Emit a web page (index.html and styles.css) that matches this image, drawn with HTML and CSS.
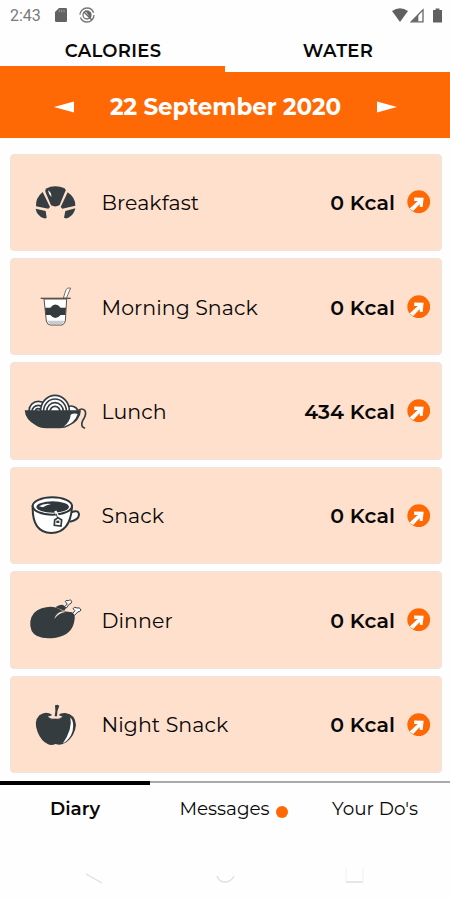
FILE: index.html
```html
<!DOCTYPE html>
<html lang="en">
<head>
<meta charset="utf-8">
<title>Diary</title>
<link rel="stylesheet" href="styles.css">
</head>
<body>
<svg width="0" height="0" class="defs"><defs>
<symbol id="go" viewBox="0 0 72 72"><circle cx="36" cy="36" r="35" fill="#ff6905"/><path d="M22 23L51 24L48 52L39 51V43L19 64L8 57L33 34H22Z" fill="#fff"/></symbol>
</defs></svg>
<header class="status">
  <span class="clock">2:43</span>
  <svg class="sd" viewBox="0 0 36 42"><path d="M12 0H32Q36 0 36 4V38Q36 42 32 42H4Q0 42 0 38V12Z" fill="#626262"/><path d="M13 5V13M20 5V13M27 5V13" stroke="#999" stroke-width="3"/></svg>
  <svg class="sync" viewBox="0 0 48 48"><circle cx="24" cy="24" r="21" fill="none" stroke="#777" stroke-width="4" stroke-dasharray="58 8"/><circle cx="24" cy="24" r="12" fill="none" stroke="#777" stroke-width="4"/><path d="M14 14L38 38M23 14L34 18V29Z" stroke="#666" stroke-width="4" fill="#666"/></svg>
  <span class="space"></span>
  <svg class="wifi" viewBox="0 0 48 42"><path d="M0 9Q24-8 48 9L24 42Z" fill="#606060"/></svg>
  <svg class="signal" viewBox="0 0 42 44"><path d="M4 41L39 5V41Z" fill="none" stroke="#686868" stroke-width="4"/><path d="M4 41L25 20V41Z" fill="#686868"/></svg>
  <svg class="battery" viewBox="0 0 28 44"><path d="M8 0H20V5H28V44H0V5H8Z" fill="#606060"/></svg>
</header>
<nav class="tabs"><div class="tab active"><span class="t-cal">CALORIES</span></div><div class="tab"><span class="t-wat">WATER</span></div></nav>
<section class="date">
  <svg class="arrow" viewBox="0 0 20 12"><path d="M0 6L20 .5V11.5Z" fill="#fff"/></svg>
  <h1>22 September 2020</h1>
  <svg class="arrow" viewBox="0 0 20 12"><path d="M20 6L0 .5V11.5Z" fill="#fff"/></svg>
</section>
<main class="meals">
  <article class="meal">
    <svg class="icon" viewBox="-15 -17 255 225"><g fill="#363e41"><path d="M77 54Q105 40 134 53L137 59L119 103Q107 111 93 104L76 63Z"/><path d="M68 64L90 109L85 114L48 107Q46 82 68 64Z"/><path d="M143 65L122 109L127 114L166 105Q166 80 143 65Z"/><path d="M47 114L77 121L80 141Q76 145 70 142Q50 134 47 114Z"/><path d="M166 113L136 121L132 141Q139 145 145 141Q162 133 166 113Z"/></g><path d="M84 59Q86 72 94 79Q95 65 84 59Z" fill="#fff"/></svg>
    <span class="name">Breakfast</span><span class="kcal">0 Kcal</span><svg class="go"><use href="#go"/></svg>
  </article>
  <article class="meal">
    <svg class="icon" viewBox="0 -3 255 225"><path d="M145 84L153 59Q157 52 167 54L154 85Z" fill="#fff" stroke="#776d66" stroke-width="3"/><path d="M87 87L94 153Q96 164 106 165H141Q149 162 151 153L155 87Z" fill="#fff" stroke="#55504c" stroke-width="3"/><path d="M96 152H149L141 163H105Z" fill="#c8cbcf"/><path d="M90 113H106Q121 94 137 113H153L151 135H137Q121 153 106 135H93Z" fill="#343c40"/><path d="M77 85H167" stroke="#5c504b" stroke-width="4"/></svg>
    <span class="name">Morning Snack</span><span class="kcal">0 Kcal</span><svg class="go"><use href="#go"/></svg>
  </article>
  <article class="meal">
    <svg class="icon" viewBox="0 -5 255 225"><g fill="#fff" stroke="#343c40" stroke-width="5"><ellipse cx="70" cy="105" rx="28" ry="28"/><ellipse cx="70" cy="107" rx="19" ry="18"/><ellipse cx="70" cy="108" rx="9" ry="9"/><ellipse cx="167" cy="109" rx="22" ry="18"/><ellipse cx="120" cy="105" rx="43" ry="46"/><ellipse cx="120" cy="106" rx="34" ry="36"/><ellipse cx="120" cy="107" rx="25" ry="26"/><ellipse cx="120" cy="108" rx="15" ry="16"/></g><path d="M29 104H198Q196 137 160 152Q151 158 134 158H94Q74 158 62 149Q31 132 29 104Z" fill="#343c40"/><path d="M167 117Q177 111 188 115Q180 142 146 153Q166 137 167 117Z" fill="#fff"/><path d="M190 104Q201 96 209 104Q215 113 208 126Q197 142 202 153L210 158" fill="none" stroke="#343c40" stroke-width="5"/></svg>
    <span class="name">Lunch</span><span class="kcal">434 Kcal</span><svg class="go"><use href="#go"/></svg>
  </article>
  <article class="meal">
    <svg class="icon" viewBox="0 -7 255 225"><path d="M169 96Q191 87 192 103Q191 119 164 124" fill="#fff" stroke="#30373a" stroke-width="6"/><path d="M53 78Q51 157 109 158Q167 157 171 78Z" fill="#fff" stroke="#30373a" stroke-width="6"/><ellipse cx="112" cy="77" rx="59" ry="26" fill="#fff" stroke="#30373a" stroke-width="6"/><ellipse cx="113" cy="80" rx="49" ry="17" fill="#30373a"/><path d="M72 78Q85 68 108 71Q91 75 84 81Z" fill="#fff"/><path d="M121 92L130 111" stroke="#fff" stroke-width="7"/><path d="M123 100L129 116" stroke="#30373a" stroke-width="3"/><path d="M119 119L129 112L140 119L138 137L118 135Z" fill="#fff" stroke="#30373a" stroke-width="5"/><path d="M124 121H133V128H124Z" fill="#30373a"/></svg>
    <span class="name">Snack</span><span class="kcal">0 Kcal</span><svg class="go"><use href="#go"/></svg>
  </article>
  <article class="meal">
    <svg class="icon" viewBox="0 -9 255 225"><path d="M121 67Q143 50 153 69L148 77Z" fill="#343c40"/><path d="M148 66L157 57L151 50Q151 44 160 47Q169 42 170 50L168 55Q162 55 154 69Z" fill="#fff" stroke="#343c40" stroke-width="3"/><path d="M172 86L180 77L174 71Q178 64 186 69Q194 65 198 75Q196 80 188 81L179 91Z" fill="#fff" stroke="#343c40" stroke-width="3"/><path d="M46 109Q51 79 80 70Q115 58 139 76Q151 80 171 82Q183 90 178 108Q172 149 123 158Q65 166 50 138Q44 125 46 109Z" fill="#343c40"/><path d="M147 79Q125 80 118 102Q130 84 152 81Z" fill="#ffe0ce"/></svg>
    <span class="name">Dinner</span><span class="kcal">0 Kcal</span><svg class="go"><use href="#go"/></svg>
  </article>
  <article class="meal">
    <svg class="icon" viewBox="0 -12 255 225"><path d="M119 76Q123 62 120 43L127 41L133 44Q126 57 126 76Z" fill="#343c40"/><path d="M112 72Q92 58 73 73Q55 91 68 124Q79 151 98 159Q108 165 122 159Q138 165 154 154Q180 134 183 102Q181 70 151 66Q137 65 131 72L142 77Q132 84 119 82Q107 84 99 77Z" fill="#343c40"/><path d="M166 79Q178 92 173 119Q166 145 143 158Q157 138 164 116Q170 97 166 79Z" fill="#fff"/><path d="M100 76Q109 87 120 82Q133 87 142 76" fill="none" stroke="#e4d2c7" stroke-width="2"/></svg>
    <span class="name">Night Snack</span><span class="kcal">0 Kcal</span><svg class="go"><use href="#go"/></svg>
  </article>
</main>
<nav class="bottom">
  <div class="item current"><span>Diary</span></div>
  <div class="item messages"><span>Messages</span><i class="dot"></i></div>
  <div class="item"><span>Your Do's</span></div>
</nav>
<footer class="system">
  <svg viewBox="0 0 450 40"><g fill="none" stroke="#dedede" stroke-width="1.3"><path d="M86 14L102 23M217 16Q219 22 225 22Q231 22 234 16M346 22H363"/><path d="M346 8V22M363 8V22" stroke="#f3f3f3"/></g></svg>
</footer>
</body>
</html>
```
FILE: styles.css
```css
* { box-sizing: border-box; }
body { margin: 0; width: 450px; height: 900px; overflow: hidden; background: #fefefe; color: #080808; font-family: Montserrat, Inter, sans-serif; display: flex; flex-direction: column; }
svg { display: block; flex: none; }
.defs { position: absolute; }
.status { height: 30px; flex: none; display: flex; align-items: center; padding: 0 8px 0 10px; }
.clock { font: 16px Roboto, sans-serif; color: #7a7a7a; width: 45px; }
.sd { width: 12px; height: 14px; }
.sync { width: 16px; height: 16px; margin-left: 12px; }
.space { flex: 1; }
.wifi { width: 16px; height: 14px; }
.signal { width: 14px; height: 15px; margin-left: 2px; }
.battery { width: 9px; height: 15px; margin-left: 9px; }
.tabs { height: 42px; flex: none; display: flex; }
.tab { width: 225px; text-align: center; font-size: 18px; line-height: 42px; font-weight: 650; white-space: nowrap; letter-spacing: .3px; }
.tab.active { border-bottom: 6px solid #ff6905; }
.t-cal, .t-wat { margin-left: 1px; }
.date { height: 66px; flex: none; background: #ff6905; display: flex; align-items: center; padding: 3px 53px 0 54px; justify-content: space-between; }
.date h1 { margin: 0; color: #fff; font-size: 23px; line-height: 30px; font-weight: 700; letter-spacing: -.05px; white-space: nowrap; }
.arrow { width: 20px; height: 12px; }
.meals { flex: none; height: 643px; padding: 15.5px 8.5px 8px 9.5px; display: grid; grid-template-rows: repeat(6, 1fr); gap: 7px; }
.meal { display: flex; align-items: center; background: #ffe0cd; border: 1px solid #eee4df; border-radius: 4px; padding: 0 10.5px 0 4px; min-height: 0; white-space: nowrap; }
.icon { width: 85px; height: 75px; }
.name { font-size: 20.5px; margin-left: 2px; padding-top: 1px; flex: 1; letter-spacing: .07px; }
.kcal { font-size: 20.5px; font-weight: 650; letter-spacing: .1px; margin-right: 11.5px; padding-top: 1px; }
.go { width: 23.5px; height: 23.5px; }
.bottom { height: 54px; flex: none; display: flex; }
.item { width: 150px; border-top: 2px solid #a9a9a9; display: flex; justify-content: center; font-size: 18.4px; line-height: 52px; white-space: nowrap; }
.item.current { border-top: 4px solid #000; line-height: 48px; font-weight: 650; }
.messages { padding-left: 17px; }
.dot { width: 12px; height: 12px; border-radius: 50%; background: #ff6905; margin: 23px 0 0 6px; }
.system { flex: none; margin-top: 25px; }
.system svg { width: 450px; height: 40px; }
```
